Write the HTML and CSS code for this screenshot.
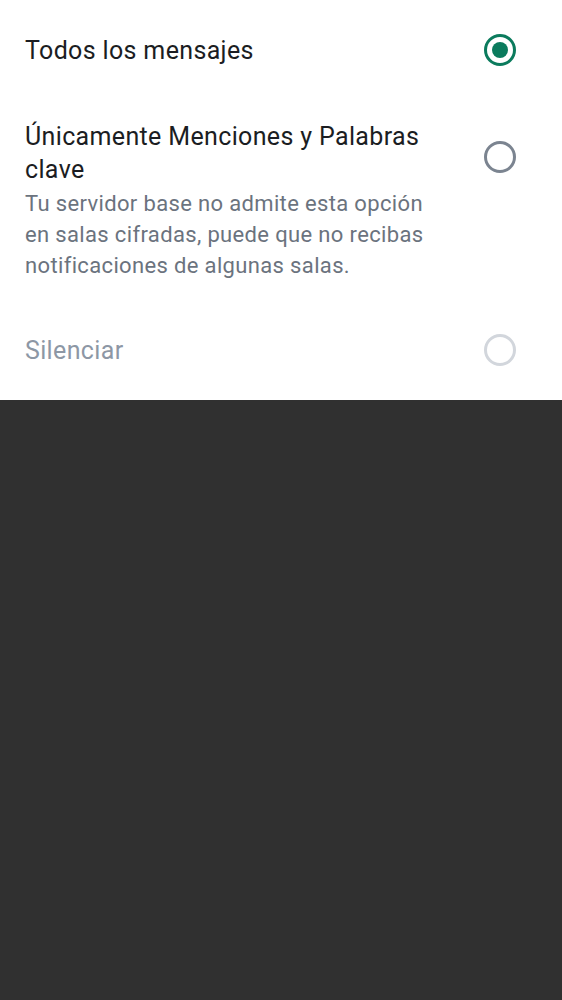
FILE: index.html
```html
<!DOCTYPE html>
<html lang="es">
<head>
<meta charset="utf-8">
<link rel="stylesheet" href="styles.css">
</head>
<body>
<div class="sheet">
  <div class="row row-single">
    <div class="text">
      <div class="title">Todos los mensajes</div>
    </div>
    <div class="radio">
      <svg width="32" height="32" viewBox="0 0 32 32"><circle cx="16" cy="16" r="14.5" fill="none" stroke="#0b7b5d" stroke-width="3"/><circle cx="16" cy="16" r="8" fill="#0b7b5d"/></svg>
    </div>
  </div>
  <div class="row row-multi">
    <div class="text">
      <div class="title">Únicamente Menciones y Palabras clave</div>
      <div class="subtitle">Tu servidor base no admite esta opción en salas cifradas, puede que no recibas notificaciones de algunas salas.</div>
    </div>
    <div class="radio radio-top">
      <svg width="32" height="32" viewBox="0 0 32 32"><circle cx="16" cy="16" r="14.5" fill="none" stroke="#7b8490" stroke-width="3"/></svg>
    </div>
  </div>
  <div class="row row-single">
    <div class="text">
      <div class="title disabled">Silenciar</div>
    </div>
    <div class="radio">
      <svg width="32" height="32" viewBox="0 0 32 32"><circle cx="16" cy="16" r="14.5" fill="none" stroke="#d2d6dc" stroke-width="3"/></svg>
    </div>
  </div>
</div>
</body>
</html>
```
FILE: styles.css
```css
html, body {
  margin: 0;
  padding: 0;
  background: #303030;
  font-family: Roboto, "Noto Sans", sans-serif;
}
.sheet {
  background: #ffffff;
  display: flex;
  flex-direction: column;
}
.row {
  display: flex;
  align-items: center;
  gap: 24px;
  padding: 0 38px 0 25px;
}
.row-single {
  height: 100px;
}
.row-multi {
  align-items: flex-start;
  padding-top: 20px;
  padding-bottom: 19px;
}
.text {
  flex: 1;
  min-width: 0;
}
.title {
  font-size: 25px;
  line-height: 33px;
  color: #1b1d22;
  letter-spacing: 0.35px;
}
.title.disabled {
  color: #8d97a5;
}
.subtitle {
  margin-top: 2px;
  font-size: 22px;
  line-height: 31px;
  color: #6b737e;
  letter-spacing: 0.35px;
}
.radio {
  width: 48px;
  height: 48px;
  display: flex;
  align-items: center;
  justify-content: center;
  flex: none;
}
.radio svg {
  display: block;
}
.radio-top {
  margin-top: 13px;
}
```
